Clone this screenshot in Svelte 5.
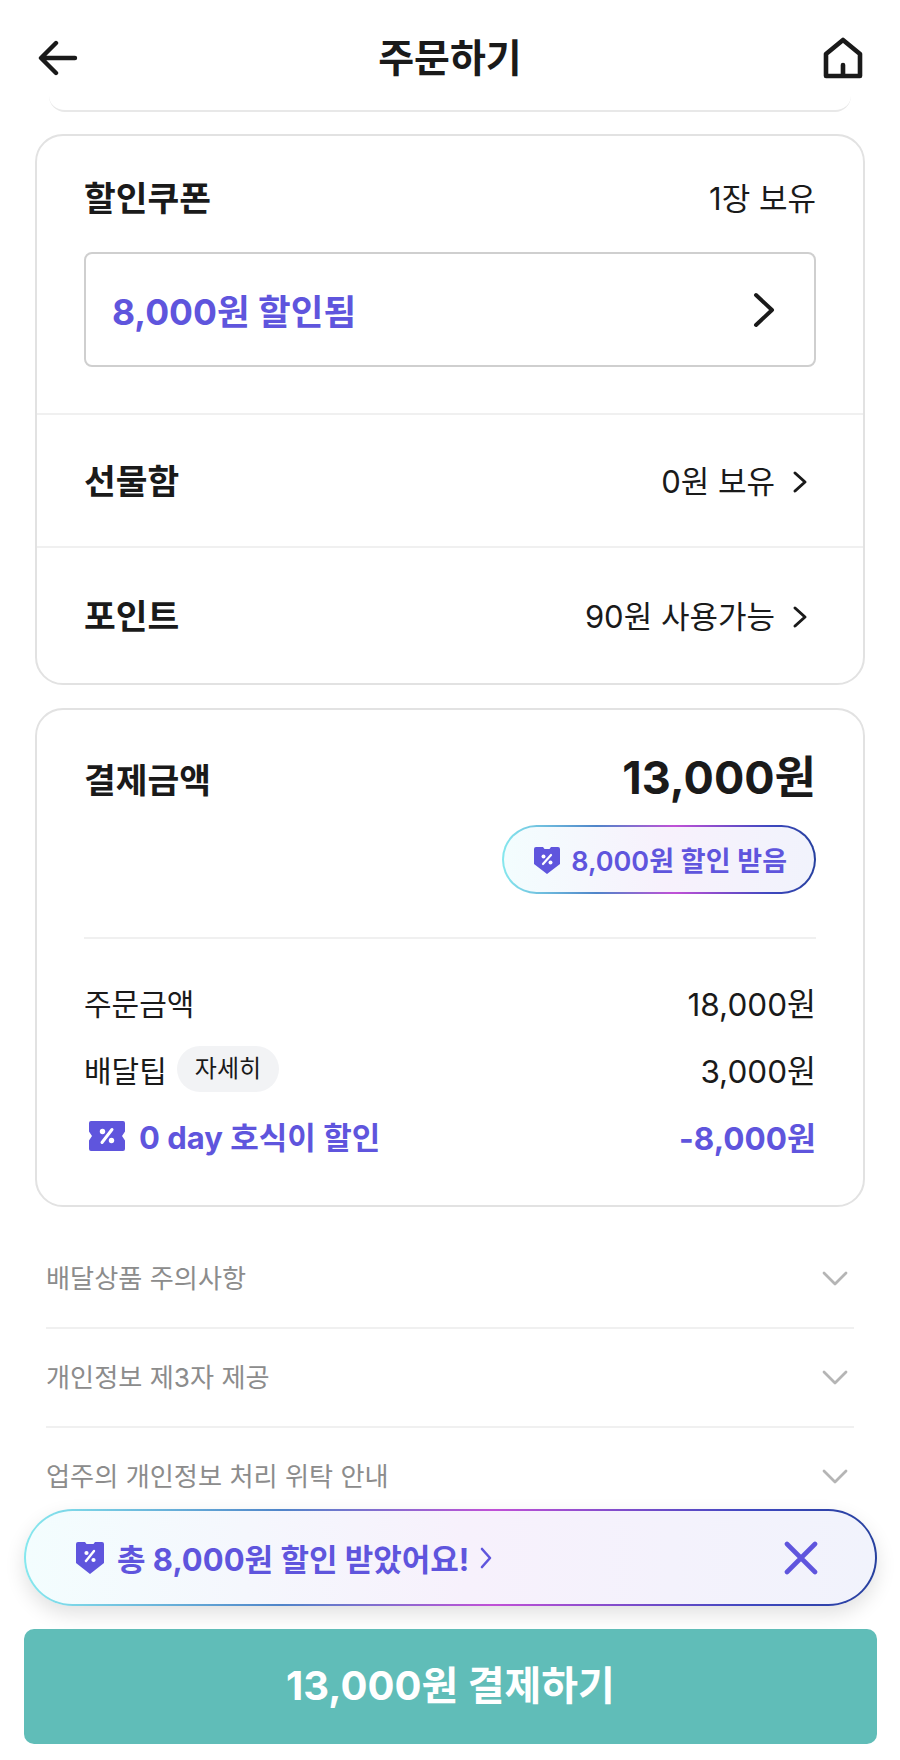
<script lang="ts">
  const notices = ["배달상품 주의사항", "개인정보 제3자 제공", "업주의 개인정보 처리 위탁 안내"];
</script>

<div class="page">
  <header class="topbar">
    <svg viewBox="0 0 40 36" width="40" height="36" fill="none" stroke="#1a1a1a" stroke-width="4.4" stroke-linecap="round" stroke-linejoin="round">
      <path d="M18 3 3 18l15 15M4 18h33" />
    </svg>
    <h1>주문하기</h1>
    <svg viewBox="0 0 42 42" width="42" height="42" fill="none" stroke="#1a1a1a" stroke-width="4.6" stroke-linejoin="round" stroke-linecap="round">
      <path d="M21 3 4 17v22h34V17L21 3Z" />
      <path d="M21 38V28" />
    </svg>
  </header>

  <div class="scroll">
    <div class="prev-card"></div>

    <section class="card">
      <div class="coupon">
        <div class="row">
          <h2>할인쿠폰</h2>
          <span class="value">1장 보유</span>
        </div>
        <button class="coupon-box">
          <span>8,000원 할인됨</span>
          <svg viewBox="0 0 24 36" width="24" height="36" fill="none" stroke="#1a1a1a" stroke-width="4" stroke-linecap="round" stroke-linejoin="round">
            <path d="M4 3l16 15L4 33" />
          </svg>
        </button>
      </div>
      <div class="link-row">
        <h2>선물함</h2>
        <span class="value">0원 보유
          <svg viewBox="0 0 16 24" width="16" height="24" fill="none" stroke="#1a1a1a" stroke-width="3" stroke-linecap="round" stroke-linejoin="round"><path d="M3 3l10 9-10 9" /></svg>
        </span>
      </div>
      <div class="link-row">
        <h2>포인트</h2>
        <span class="value">90원 사용가능
          <svg viewBox="0 0 16 24" width="16" height="24" fill="none" stroke="#1a1a1a" stroke-width="3" stroke-linecap="round" stroke-linejoin="round"><path d="M3 3l10 9-10 9" /></svg>
        </span>
      </div>
    </section>

    <section class="card total">
      <div class="row total-head">
        <h2>결제금액</h2>
        <strong>13,000원</strong>
      </div>
      <div class="pill-wrap">
        <div class="pill">
          <svg viewBox="0 0 28 30" width="28" height="30">
            <path fill="#5f55dd" d="M3 2h7l1.500 2h5L18 2h7a2 2 0 0 1 2 2v15L14 29 1 19V4a2 2 0 0 1 2-2Z" />
            <path fill="none" stroke="#fff" stroke-width="2.200" stroke-linecap="round" d="M18 10l-8 9" />
            <circle cx="10.500" cy="11.500" r="2" fill="#fff" /><circle cx="17.500" cy="17.500" r="2" fill="#fff" />
          </svg>
          <span>8,000원 할인 받음</span>
        </div>
      </div>
      <div class="breakdown">
        <div class="row line">
          <span>주문금액</span><span class="amount">18,000원</span>
        </div>
        <div class="row line">
          <span class="tip">배달팁 <em>자세히</em></span><span class="amount">3,000원</span>
        </div>
        <div class="row line discount">
          <span class="tip">
            <svg viewBox="0 0 36 32" width="36" height="32">
              <path fill="#5f55dd" d="M2 1h32a2 2 0 0 1 2 2v8.500l-3 4.500 3 4.500V29a2 2 0 0 1-2 2H2a2 2 0 0 1-2-2v-8.500L3 16l-3-4.500V3a2 2 0 0 1 2-2Z" />
              <path fill="none" stroke="#fff" stroke-width="3" stroke-linecap="round" d="M23 9.500 13 22.500" />
              <circle cx="13.500" cy="11.500" r="2.700" fill="#fff" /><circle cx="22.500" cy="20.500" r="2.700" fill="#fff" />
            </svg>
            0 day 호식이 할인
          </span>
          <span class="amount">-8,000원</span>
        </div>
      </div>
    </section>

    <ul class="notices">
      {#each notices as notice}
        <li>
          <span>{notice}</span>
          <svg viewBox="0 0 28 18" width="28" height="18" fill="none" stroke="#b5b5b5" stroke-width="2.800" stroke-linecap="round" stroke-linejoin="round"><path d="M3 3l11 11L25 3" /></svg>
        </li>
      {/each}
    </ul>
  </div>

  <div class="bottom">
    <div class="toast">
      <svg viewBox="0 0 30 34" width="30" height="34">
        <path fill="#5f55dd" d="M3 1h7l1.500 2h7L20 1h7a2 2 0 0 1 2 2v19L15 33 1 22V3a2 2 0 0 1 2-2Z" />
        <path fill="none" stroke="#fff" stroke-width="2.400" stroke-linecap="round" d="M19 10l-8 10" />
        <circle cx="11.500" cy="12" r="2.100" fill="#fff" /><circle cx="18.500" cy="19" r="2.100" fill="#fff" />
      </svg>
      <span class="toast-text">총 8,000원 할인 받았어요!</span>
      <svg class="toast-arrow" viewBox="0 0 14 24" width="14" height="24" fill="none" stroke="#5f55dd" stroke-width="2.600" stroke-linecap="round" stroke-linejoin="round"><path d="M3 3l8 9-8 9" /></svg>
      <svg class="close" viewBox="0 0 34 34" width="34" height="34" fill="none" stroke="#5f55dd" stroke-width="4.600" stroke-linecap="round"><path d="M3 3l28 28M31 3 3 31" /></svg>
    </div>
    <button class="pay">13,000원 결제하기</button>
  </div>
</div>

<style>
  :global(body) {
    margin: 0;
    background: #fff;
  }
  .page {
    position: relative;
    width: 900px;
    height: 1760px;
    overflow: hidden;
    background: #fff;
    color: #1a1a1a;
    font-family: Inter, "Noto Sans CJK KR", sans-serif;
  }
  .topbar {
    height: 110px;
    box-sizing: border-box;
    padding: 6px 36px 0 38px;
    display: flex;
    align-items: center;
    justify-content: space-between;
    position: relative;
  }
  .topbar h1 {
    position: absolute;
    left: 0;
    right: 0;
    top: 29px;
    margin: 0;
    text-align: center;
    font-size: 39px;
    line-height: 58px;
    font-weight: 700;
  }
  .scroll {
    margin-top: -2px;
  }
  .prev-card {
    height: 14px;
    margin: -14px 49px 0;
    border-bottom: 2px solid #e8e8e8;
    border-radius: 0 0 22px 22px;
  }
  .card {
    margin: 22px 35px 0;
    border: 2px solid #e2e2e2;
    border-radius: 28px;
  }
  .total {
    margin-top: 23px;
    padding: 0 47px 36px;
  }
  .row {
    display: flex;
    align-items: center;
    justify-content: space-between;
  }
  h2 {
    margin: 0;
    font-size: 34.5px;
    line-height: 54px;
    font-weight: 700;
  }
  .value {
    display: flex;
    align-items: center;
    gap: 17px;
    font-size: 31px;
    line-height: 50px;
  }
  .coupon {
    padding: 36px 47px 46px;
    border-bottom: 2px solid #f0f0f0;
  }
  .coupon-box {
    width: 100%;
    height: 115px;
    margin-top: 26px;
    padding: 0 38px 0 26px;
    box-sizing: border-box;
    border: 2px solid #cfcfcf;
    border-radius: 8px;
    background: #fff;
    display: flex;
    align-items: center;
    justify-content: space-between;
    font: inherit;
    font-size: 35.5px;
    font-weight: 700;
    color: #5f55dd;
  }
  .link-row {
    height: 128px;
    padding: 3px 55px 0 47px;
    display: flex;
    align-items: center;
    justify-content: space-between;
    border-bottom: 2px solid #f0f0f0;
  }
  .link-row:last-child {
    height: 132px;
    border-bottom: none;
  }
  .total-head {
    padding-top: 38px;
  }
  .total-head h2 {
    margin-top: 5px;
  }
  .total-head strong {
    font-size: 45px;
    line-height: 60px;
    font-weight: 700;
  }
  .pill-wrap {
    display: flex;
    justify-content: flex-end;
    margin-top: 17px;
    padding-bottom: 43px;
    border-bottom: 2px solid #f0f0f0;
  }
  .pill {
    height: 69px;
    box-sizing: border-box;
    padding: 0 27px 0 29px;
    display: flex;
    align-items: center;
    gap: 10px;
    border: 2px solid transparent;
    border-radius: 35px;
    background: linear-gradient(90deg, #f3fdfe, #f7f1fc 52%, #f1f3fc) padding-box,
      linear-gradient(90deg, #86e8ee, #4f85c9 30%, #c050d6 55%, #3f48c0 85%, #26409e) border-box;
    color: #5f55dd;
    font-size: 27px;
    font-weight: 600;
  }
  .breakdown {
    padding-top: 29px;
  }
  .line {
    height: 67px;
    font-size: 30px;
  }
  .amount {
    font-size: 31.5px;
  }
  .tip {
    display: flex;
    align-items: center;
    gap: 10px;
  }
  .tip em {
    font-style: normal;
    height: 46px;
    line-height: 46px;
    padding: 0 18px;
    border-radius: 23px;
    background: #f2f3f5;
    font-size: 24px;
  }
  .discount {
    color: #5f55dd;
    font-weight: 700;
  }
  .discount .tip {
    gap: 14px;
    margin-left: 5px;
    font-size: 31px;
  }
  .notices {
    list-style: none;
    margin: 23px 46px 0;
    padding: 0;
  }
  .notices li {
    height: 99px;
    padding: 0 5px 4px 0;
    display: flex;
    align-items: center;
    justify-content: space-between;
    border-bottom: 2px solid #f0f0f0;
    box-sizing: border-box;
    color: #8c8c8c;
    font-size: 26.2px;
  }
  .notices li svg {
    margin-top: 4px;
  }
  .bottom {
    position: absolute;
    left: 24px;
    right: 23px;
    top: 1509px;
  }
  .toast {
    height: 97px;
    box-sizing: border-box;
    padding: 0 57px 0 49px;
    display: flex;
    align-items: center;
    gap: 12px;
    border: 2px solid transparent;
    border-radius: 49px;
    background: linear-gradient(90deg, #f3fdfe, #f7f1fc 52%, #f1f3fc) padding-box,
      linear-gradient(90deg, #86e8ee, #4f85c9 30%, #c050d6 55%, #3f48c0 85%, #26409e) border-box;
    box-shadow: 0 8px 20px rgba(0, 0, 0, 0.12);
    color: #5f55dd;
  }
  .toast-text {
    font-size: 31px;
    font-weight: 700;
  }
  .toast-arrow {
    margin-left: -2px;
  }
  .close {
    margin-left: auto;
  }
  .pay {
    display: block;
    width: 100%;
    height: 115px;
    margin-top: 23px;
    padding: 0 0 8px;
    border: none;
    border-radius: 10px;
    background: #60bdb8;
    color: #fff;
    font: inherit;
    font-size: 40px;
    font-weight: 700;
  }
</style>
